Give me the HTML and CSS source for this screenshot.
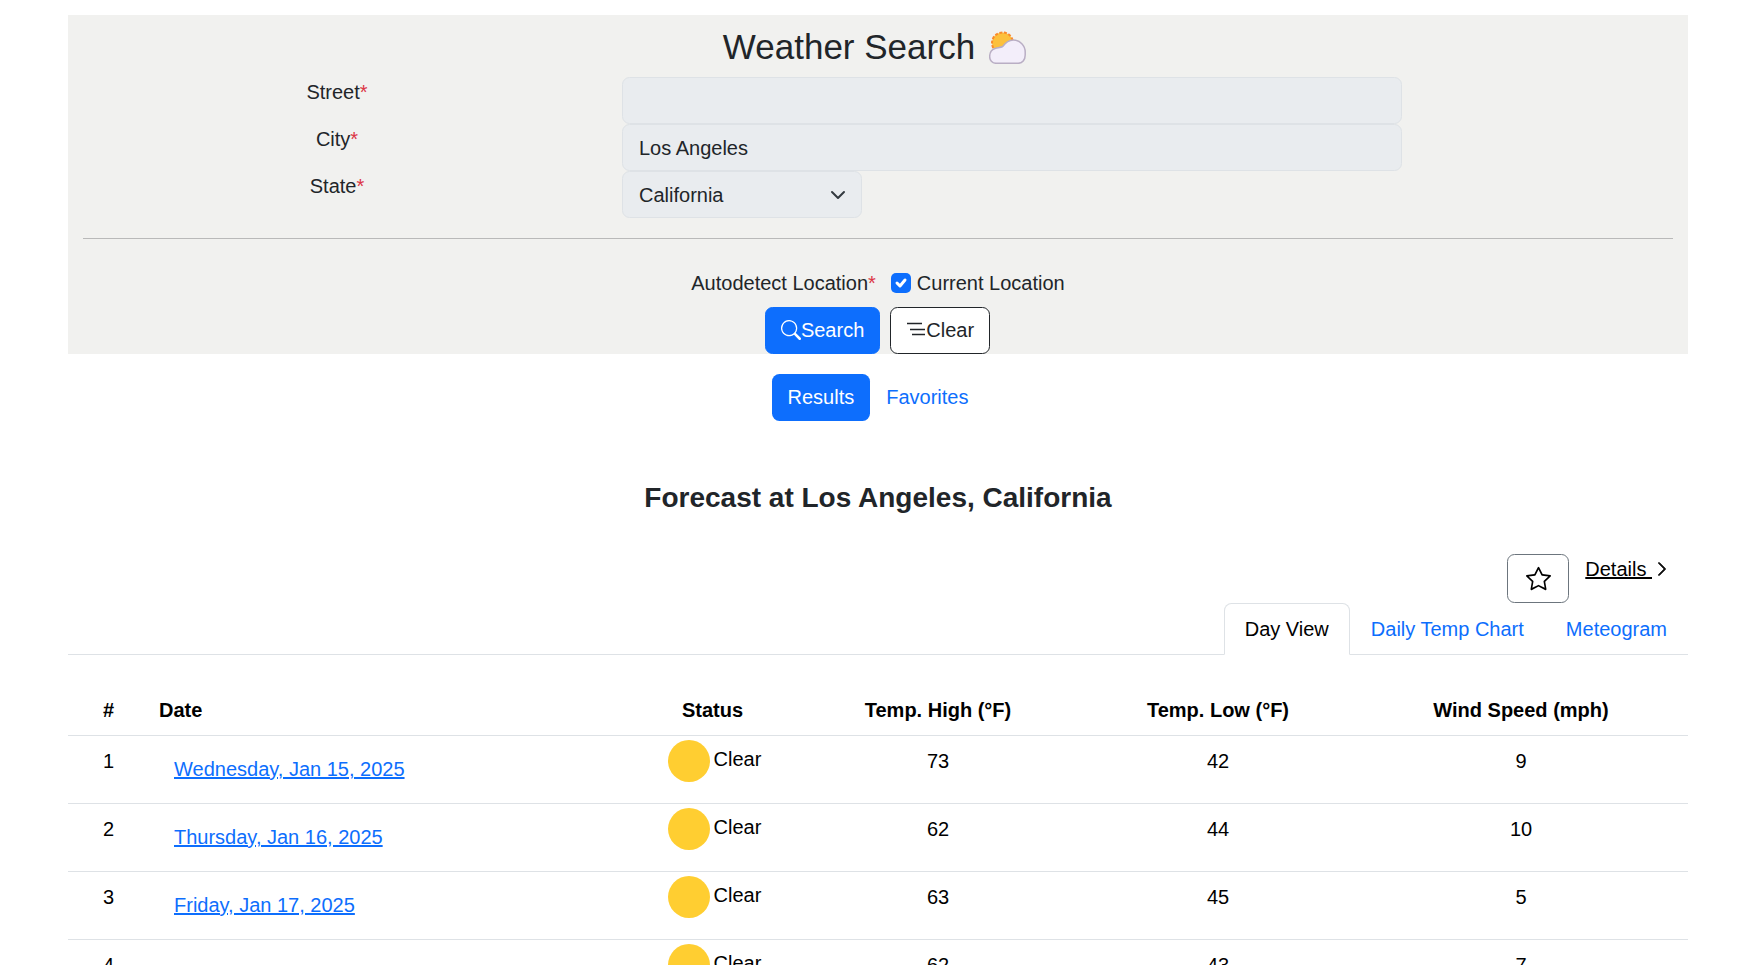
FILE: index.html
```html
<!DOCTYPE html>
<html lang="en">
<head>
    <meta charset="UTF-8">
    <title>Weather Search</title>
    <link rel="stylesheet" href="styles.css">
</head>
<body>
    <div class="page">
        <form class="search-panel">
            <h3 class="search-title">
                Weather Search
                <svg class="title-icon" viewBox="0 0 37 33">
                    <circle cx="13.5" cy="12" r="10.500" fill="#fcc03c" stroke="#f98a2c" stroke-width="2" stroke-dasharray="3 1.600"/>
                    <path d="M7 32.300a6.500 6.500 0 0 1-6.300-7c0-4 2.500-7 6-8 3-.7 5-.8 7-1.800 3-4 6-6.500 10.500-6.500 7 0 12 5.800 12 12v3c0 5-3 8.300-7 8.300z" fill="#f3eefa" stroke="#b9aec4" stroke-width="1.500"/>
                </svg>
            </h3>
            <div class="form-grid">
                <label class="field-label">Street<span class="req">*</span></label>
                <input class="form-input" type="text">
                <label class="field-label">City<span class="req">*</span></label>
                <input class="form-input" type="text" value="Los Angeles">
                <label class="field-label">State<span class="req">*</span></label>
                <div class="select-box">
                    California
                    <svg class="select-arrow" viewBox="0 0 16 16"><path d="M2 5l6 6 6-6" fill="none" stroke="#343a40" stroke-width="2" stroke-linecap="round" stroke-linejoin="round"/></svg>
                </div>
            </div>
            <hr class="divider">
            <div class="autodetect">
                <span class="autodetect-label">Autodetect Location<span class="req">*</span></span>
                <span class="check-box">
                    <svg viewBox="0 0 20 20"><path d="M6 10l3 3 5-6" fill="none" stroke="#fff" stroke-width="3" stroke-linecap="round" stroke-linejoin="round"/></svg>
                </span>
                <span>Current Location</span>
            </div>
            <div class="form-buttons">
                <button class="btn btn-primary" type="button">
                    <svg class="btn-icon" viewBox="0 0 16 16" fill="currentColor"><path d="M11.742 10.344a6.500 6.500 0 1 0-1.397 1.398h-.001c.03.04.062.078.098.115l3.850 3.850a1 1 0 0 0 1.415-1.414l-3.850-3.850a1.007 1.007 0 0 0-.115-.1zM12 6.500a5.500 5.500 0 1 1-11 0 5.500 5.500 0 0 1 11 0z"/></svg>Search
                </button>
                <button class="btn btn-outline" type="button">
                    <svg class="btn-icon" viewBox="0 0 20 20" stroke="currentColor" stroke-width="1.300"><path d="M1 3.500h15M4 9.500h15M6 14.500h13"/></svg>Clear
                </button>
            </div>
        </form>

        <nav class="result-nav">
            <a class="pill active">Results</a>
            <a class="pill">Favorites</a>
        </nav>

        <h4 class="forecast-title">Forecast at Los Angeles, California</h4>

        <div class="actions">
            <button class="star-btn" type="button">
                <svg viewBox="0 0 16 16" fill="#000"><path d="M2.866 14.850c-.078.444.36.791.746.593l4.390-2.256 4.389 2.256c.386.198.824-.149.746-.592l-.83-4.730 3.522-3.356c.33-.314.16-.888-.282-.95l-4.898-.696L8.465.792a.513.513 0 0 0-.927 0L5.354 5.120l-4.898.696c-.441.062-.612.636-.283.95l3.523 3.356-.83 4.730zm4.905-2.767-3.686 1.894.694-3.957a.565.565 0 0 0-.163-.505L1.710 6.745l4.052-.576a.525.525 0 0 0 .393-.288L8 2.223l1.847 3.658a.525.525 0 0 0 .393.288l4.052.575-2.906 2.770a.565.565 0 0 0-.163.506l.694 3.957-3.686-1.894a.503.503 0 0 0-.461 0z"/></svg>
            </button>
            <a class="details-link"><span class="details-text">Details&nbsp;</span>
                <svg class="details-arrow" viewBox="0 0 16 16" fill="#000" stroke="#000" stroke-width="1"><path d="M4.646 1.646a.5.5 0 0 1 .708 0l6 6a.5.5 0 0 1 0 .708l-6 6a.5.5 0 0 1-.708-.708L10.293 8 4.646 2.354a.5.5 0 0 1 0-.708z"/></svg>
            </a>
        </div>

        <ul class="tabs">
            <li class="tab active">Day View</li>
            <li class="tab">Daily Temp Chart</li>
            <li class="tab">Meteogram</li>
        </ul>

        <table class="forecast-table">
            <colgroup>
                <col class="col-num"><col class="col-date"><col class="col-status">
                <col class="col-high"><col class="col-low"><col class="col-wind">
            </colgroup>
            <thead>
                <tr>
                    <th>#</th>
                    <th class="left">Date</th>
                    <th>Status</th>
                    <th>Temp. High (°F)</th>
                    <th>Temp. Low (°F)</th>
                    <th>Wind Speed (mph)</th>
                </tr>
            </thead>
            <tbody>
                <tr>
                    <td>1</td>
                    <td class="left"><a class="date-link">Wednesday, Jan 15, 2025</a></td>
                    <td><div class="status"><span class="sun"></span><span class="status-text">Clear</span></div></td>
                    <td>73</td><td>42</td><td>9</td>
                </tr>
                <tr>
                    <td>2</td>
                    <td class="left"><a class="date-link">Thursday, Jan 16, 2025</a></td>
                    <td><div class="status"><span class="sun"></span><span class="status-text">Clear</span></div></td>
                    <td>62</td><td>44</td><td>10</td>
                </tr>
                <tr>
                    <td>3</td>
                    <td class="left"><a class="date-link">Friday, Jan 17, 2025</a></td>
                    <td><div class="status"><span class="sun"></span><span class="status-text">Clear</span></div></td>
                    <td>63</td><td>45</td><td>5</td>
                </tr>
                <tr>
                    <td>4</td>
                    <td class="left"><a class="date-link">Saturday, Jan 18, 2025</a></td>
                    <td><div class="status"><span class="sun"></span><span class="status-text">Clear</span></div></td>
                    <td>62</td><td>43</td><td>7</td>
                </tr>
            </tbody>
        </table>
    </div>
</body>
</html>
```

FILE: styles.css
```css
html, body {
    height: 100%;
    margin: 0;
    overflow: hidden;
}

body {
    font-family: "Liberation Sans", Arial, sans-serif;
    font-size: 20px;
    line-height: 30px;
    color: #212529;
    background-color: #fff;
}

.page {
    padding: 15px 75px 0 68px;
}

/* search form */
.search-panel {
    background-color: #f1f1ef;
    padding-top: 11px;
    height: 339px;
    box-sizing: border-box;
}

.search-title {
    display: flex;
    justify-content: center;
    align-items: center;
    font-size: 35px;
    font-weight: 400;
    line-height: 42px;
    margin: 0 0 9px;
    padding-right: 7px;
}

.title-icon {
    width: 37px;
    height: 33px;
    margin-left: 14px;
    margin-top: 1px;
}

.form-grid {
    display: grid;
    grid-template-columns: 538px 780px;
    column-gap: 16px;
}

.field-label {
    text-align: center;
}

.req {
    color: #dc3545;
}

.form-input, .select-box {
    height: 47px;
    box-sizing: border-box;
    background-color: #e9ecef;
    border: 1px solid #dee2e6;
    border-radius: 7.5px;
    font: inherit;
    color: #212529;
    padding: 0 16px;
}

.form-input {
    padding-top: 2px;
}

.select-box {
    width: 240px;
    display: flex;
    align-items: center;
    justify-content: space-between;
}

.select-arrow {
    width: 16px;
    height: 16px;
    margin-right: -1px;
    margin-left: 10px;
}

.divider {
    margin: 20px 15px 29px;
    border: 0;
    border-top: 1px solid #b9b9b9;
}

.autodetect {
    display: flex;
    justify-content: center;
    align-items: center;
    height: 30px;
    margin-bottom: 9px;
}

.autodetect-label {
    margin-right: 15px;
}

.check-box {
    width: 20px;
    height: 20px;
    background-color: #0d6efd;
    border-radius: 5px;
    margin-right: 6px;
}

.check-box svg {
    display: block;
}

.form-buttons {
    display: flex;
    justify-content: center;
    gap: 10px;
    padding-right: 1px;
}

.btn {
    display: inline-flex;
    align-items: center;
    height: 47px;
    box-sizing: border-box;
    padding: 0 15px 2px;
    font: inherit;
    border-radius: 7.5px;
}

.btn-primary {
    background-color: #0d6efd;
    color: #fff;
    border: 1px solid #0d6efd;
}

.btn-outline {
    background-color: #fff;
    color: #212529;
    border: 1px solid #212529;
}

.btn-icon {
    width: 20px;
    height: 20px;
}

/* results / favorites */
.result-nav {
    display: flex;
    justify-content: center;
    margin-top: 20px;
}

.pill {
    display: block;
    padding: 8px 16px;
    height: 47px;
    box-sizing: border-box;
    color: #0d6efd;
    border-radius: 7.5px;
}

.pill.active {
    background-color: #0d6efd;
    color: #fff;
}

.forecast-title {
    font-size: 28px;
    font-weight: 700;
    line-height: 34px;
    text-align: center;
    margin: 60px 0 39px;
}

.actions {
    display: flex;
    justify-content: flex-end;
    align-items: flex-start;
    height: 49px;
}

.star-btn {
    width: 62px;
    height: 49px;
    background-color: #fff;
    border: 1px solid #6c757d;
    border-radius: 7.5px;
    padding: 0;
}

.star-btn svg {
    display: block;
    width: 25px;
    height: 25px;
    margin: 0 auto;
}

.details-link {
    display: flex;
    align-items: center;
    margin: 0 18px 0 16px;
    color: #000;
}

.details-text {
    text-decoration: underline;
}

.details-arrow {
    width: 16px;
    height: 16px;
    margin-left: 2px;
}

/* tabs */
.tabs {
    display: flex;
    justify-content: flex-end;
    list-style: none;
    margin: 0;
    padding: 0;
    border-bottom: 1px solid #dee2e6;
}

.tab {
    padding: 10px 20px;
    margin-bottom: -1px;
    border: 1px solid transparent;
    border-radius: 7.5px 7.5px 0 0;
    color: #0d6efd;
}

.tab.active {
    color: #000;
    background-color: #fff;
    border-color: #dee2e6 #dee2e6 #fff;
}

/* forecast table */
.forecast-table {
    width: 100%;
    table-layout: fixed;
    border-collapse: collapse;
    margin-top: 30px;
    color: #000;
}

.col-num { width: 81px; }
.col-date { width: 482px; }
.col-status { width: 163px; }
.col-high { width: 288px; }
.col-low { width: 272px; }
.col-wind { width: 334px; }

.forecast-table th, .forecast-table td {
    padding: 10px;
    text-align: center;
    vertical-align: top;
    border-bottom: 1px solid #dee2e6;
}

.forecast-table th {
    white-space: nowrap;
}

.forecast-table td {
    padding-bottom: 8px;
    height: 49px;
}

.forecast-table .left {
    text-align: left;
}

.date-link {
    display: inline-block;
    margin: 8px 0 0 15px;
    color: #0d6efd;
    text-decoration: underline;
}

.status {
    display: flex;
    justify-content: center;
    align-items: flex-start;
    margin-top: -6px;
    padding-left: 4px;
}

.status-text {
    margin-top: 4px;
}

.sun {
    width: 42px;
    height: 42px;
    border-radius: 50%;
    background-color: #ffce31;
    margin-right: 4px;
}
```
